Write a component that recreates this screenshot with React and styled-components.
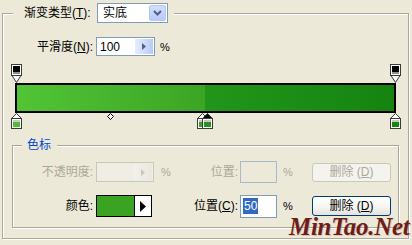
import React from "react";
import styled, { createGlobalStyle } from "styled-components";

const Global = createGlobalStyle`
  html, body { margin: 0; padding: 0; background: #ECE9D8; }
  body {
    width: 412px; height: 245px; overflow: hidden;
    font-family: "Liberation Sans", "Noto Sans CJK SC", sans-serif;
    font-size: 12px; color: #000;
  }
`;

const Page = styled.div`
  position: relative;
  width: 412px;
  height: 245px;
  box-sizing: border-box;
  padding: 3px 3px 0 2px;
`;

const GroupBox = styled.fieldset`
  margin: ${(p) => p.$margin};
  padding: 0 0 ${(p) => p.$pb}px 0;
  border: 1px solid #ACA899;
  box-shadow: inset 1px 1px 0 #fff, 1px 1px 0 #fff;
  min-width: 0;
`;

const Legend = styled.legend`
  margin-left: ${(p) => p.$ml}px;
  padding: 0 ${(p) => p.$pr}px 0 ${(p) => p.$pl}px;
  background: #ECE9D8;
  display: flex;
  align-items: center;
  line-height: 14px;
  color: ${(p) => p.$color || "#000"};
`;

const Label = styled.span`
  flex: none;
  width: ${(p) => p.$w}px;
  text-align: ${(p) => p.$align || "left"};
  padding-right: ${(p) => p.$pr || 0}px;
  box-sizing: border-box;
  white-space: nowrap;
  line-height: 14px;
  color: ${(p) => (p.$disabled ? "#ACA899" : "#000")};
`;

const Select = styled.div`
  display: flex;
  box-sizing: border-box;
  width: 71px;
  height: 20px;
  border: 1px solid #7F9DB9;
  background: #fff;
`;

const SelectText = styled.span`
  flex: 1;
  padding-left: 5px;
  line-height: 18px;
`;

const SelectButton = styled.span`
  width: 17px;
  margin: 1px;
  box-sizing: border-box;
  border: 1px solid #B4C8F6;
  border-radius: 2px;
  background: linear-gradient(#D2DEFB, #B7CBF8);
  display: flex;
  align-items: center;
  justify-content: center;
`;

const SmoothRow = styled.div`
  display: flex;
  align-items: center;
  margin-top: 14px;
  height: 19px;
`;

const SpinField = styled.div`
  display: flex;
  box-sizing: border-box;
  width: ${(p) => p.$w}px;
  height: ${(p) => p.$h}px;
  margin-left: ${(p) => p.$ml || 0}px;
  border: 1px solid ${(p) => (p.$disabled ? "#CAC8BB" : "#7F9DB9")};
  background: ${(p) => (p.$disabled ? "#EFEDE4" : "#fff")};
`;

const SpinText = styled.span`
  flex: 1;
  padding-left: 3px;
  font-size: 12px;
  display: flex;
  align-items: center;
`;

const SpinButton = styled.span`
  width: 18px;
  margin: 1px;
  display: flex;
  align-items: center;
  justify-content: center;
  background: ${(p) =>
    p.$disabled
      ? "linear-gradient(to right, #F2F1EA, #E9E7DE)"
      : "linear-gradient(to right, #E6EDFD, #B8CAF6)"};
`;

const Percent = styled.span`
  margin-left: ${(p) => p.$ml || 0}px;
  font-size: 11px;
  color: ${(p) => (p.$disabled ? "#ACA899" : "#000")};
`;

const GradientArea = styled.div`
  position: relative;
  width: 381px;
  margin: 8px 0 0 12px;
  padding: 19px 0 16px;
`;

const Bar = styled.div`
  box-sizing: border-box;
  height: 30px;
  border: 2px solid #000;
  background: linear-gradient(
    to right,
    #51C536 0%,
    #3BA524 49.8%,
    #21961A 49.8%,
    #15840F 100%
  );
`;

const StopSlot = styled.span`
  position: absolute;
  display: block;
  width: 11px;
  margin-left: -5px;
  line-height: 0;
  top: ${(p) => (p.$top ? "0" : "49px")};
`;

const Diamond = styled.span`
  position: absolute;
  top: 49px;
  width: 7px;
  height: 7px;
  margin-left: -3px;
  line-height: 0;
`;

const ColorGrid = styled.div`
  display: grid;
  grid-template-columns: 83px 58px 36px 50px 37px 35px 79px;
  grid-template-rows: 20px 22px;
  row-gap: 13px;
  align-items: center;
  margin-top: 10px;
`;

const Cell = styled.div`
  display: flex;
  align-items: center;
  justify-content: ${(p) => (p.$right ? "flex-end" : "flex-start")};
  padding-right: ${(p) => p.$pr || 0}px;
  padding-left: ${(p) => p.$pl || 0}px;
`;

const TextBox = styled.div`
  box-sizing: border-box;
  width: 37px;
  height: ${(p) => p.$h}px;
  border: 1px solid ${(p) => (p.$disabled ? "#A9B8CC" : "#7F9DB9")};
  background: ${(p) => (p.$disabled ? "#ECE9D8" : "#fff")};
  display: flex;
  align-items: center;
  padding-left: 2px;
`;

const Selected = styled.span`
  background: #316AC5;
  color: #fff;
  line-height: 16px;
  padding: 0 1px;
  font-size: 12px;
`;

const Swatch = styled.div`
  box-sizing: border-box;
  width: 56px;
  height: 22px;
  border: 1px solid #000;
  display: flex;
`;

const SwatchColor = styled.span`
  flex: 1;
  background: #3AA422;
  border-right: 1px solid #000;
`;

const SwatchArrow = styled.span`
  width: 16px;
  background: #fff;
  display: flex;
  align-items: center;
  justify-content: center;
`;

const Button = styled.div`
  box-sizing: border-box;
  width: 79px;
  height: ${(p) => (p.$disabled ? 19 : 20)}px;
  border: 1px solid ${(p) => (p.$disabled ? "#CAC8BB" : "#003C74")};
  border-radius: 3px;
  background: ${(p) =>
    p.$disabled
      ? "#F4F3EE"
      : "linear-gradient(#FFFFFF 0%, #F4F4F0 60%, #E3E1D8 100%)"};
  color: ${(p) => (p.$disabled ? "#ACA899" : "#000")};
  display: flex;
  align-items: center;
  justify-content: center;
  line-height: 14px;
  white-space: pre;
`;

const Watermark = styled.div`
  position: absolute;
  left: 289px;
  top: 213px;
  font-family: "Liberation Serif", "DejaVu Serif", serif;
  font-style: italic;
  font-weight: bold;
  font-size: 25px;
  color: #6E1C19;
  letter-spacing: -0.3px;
  text-shadow: 1px 1px 0 rgba(180, 120, 110, 0.35);
`;

const Chevron = () => (
  <svg width="9" height="6" viewBox="0 0 9 6">
    <path d="M1 1 L4.5 4.5 L8 1" fill="none" stroke="#4D6185" strokeWidth="2" />
  </svg>
);

const SmallArrow = ({ color }) => (
  <svg width="4" height="7" viewBox="0 0 4 7">
    <path d="M0 0 L4 3.5 L0 7 Z" fill={color} />
  </svg>
);

const TopStop = () => (
  <svg width="11" height="19" viewBox="0 0 11 19">
    <path d="M1 11.5 L5.5 18.5 L10 11.5 Z" fill="#fff" stroke="#3A3A3A" />
    <rect x="0.5" y="0.5" width="10" height="11" fill="#fff" stroke="#3A3A3A" />
    <rect x="2" y="2" width="7" height="6" fill="#000" />
    <rect x="2" y="8" width="7" height="2" fill="#8E8E8E" />
  </svg>
);

const BottomStop = ({ color, selected }) => (
  <svg width="11" height="16" viewBox="0 0 11 16">
    <path
      d="M5.5 0.5 L10.5 5.5 L0.5 5.5 Z"
      fill={selected ? "#000" : "#fff"}
      stroke="#3A3A3A"
    />
    <rect x="0.5" y="5.5" width="10" height="10" fill="#fff" stroke="#3A3A3A" />
    <rect x="2" y="7" width="7" height="2" fill="#C8C8C8" />
    <rect x="2" y="9" width="7" height="5" fill={color} />
  </svg>
);

const stopLeft = (p) => `calc(1px + (100% - 2px) * ${p})`;

const colorStops = [
  { p: 0, color: "#4DBE33" },
  { p: 0.492, color: "#3AA422" },
  { p: 0.503, color: "#21961A", selected: true },
  { p: 1, color: "#17860F" },
];

export default function App() {
  return (
    <>
      <Global />
      <Page>
        <GroupBox $margin="0" $pb={0}>
          <Legend $ml={10} $pl={11} $pr={6}>
            <Label $w={73}>
              渐变类型(<u>T</u>):
            </Label>
            <Select>
              <SelectText>实底</SelectText>
              <SelectButton>
                <Chevron />
              </SelectButton>
            </Select>
          </Legend>

          <SmoothRow>
            <Label $w={90} $align="right">
              平滑度(<u>N</u>):
            </Label>
            <SpinField $w={59} $h={19} $ml={3}>
              <SpinText>100</SpinText>
              <SpinButton>
                <SmallArrow color="#4D6185" />
              </SpinButton>
            </SpinField>
            <Percent $ml={5}>%</Percent>
          </SmoothRow>

          <GradientArea>
            <Bar />
            <StopSlot $top style={{ left: stopLeft(0) }}>
              <TopStop />
            </StopSlot>
            <StopSlot $top style={{ left: stopLeft(1) }}>
              <TopStop />
            </StopSlot>
            <Diamond style={{ left: stopLeft(0.2487) }}>
              <svg width="7" height="7" viewBox="0 0 7 7">
                <path d="M3.5 0.5 L6.5 3.5 L3.5 6.5 L0.5 3.5 Z" fill="#fff" stroke="#000" />
              </svg>
            </Diamond>
            {colorStops.map((s, i) => (
              <StopSlot key={i} style={{ left: stopLeft(s.p) }}>
                <BottomStop color={s.color} selected={s.selected} />
              </StopSlot>
            ))}
          </GradientArea>

          <GroupBox $margin="9px 9px 10px 9px" $pb={10}>
            <Legend $ml={9} $pl={5} $pr={6} $color="#0046D5">
              色标
            </Legend>
            <ColorGrid>
              <Cell $right $pr={3}>
                <Label $disabled>不透明度:</Label>
              </Cell>
              <Cell>
                <SpinField $w={58} $h={20} $disabled>
                  <SpinText />
                  <SpinButton $disabled>
                    <SmallArrow color="#C9C7BA" />
                  </SpinButton>
                </SpinField>
              </Cell>
              <Cell $pl={7}>
                <Percent $disabled>%</Percent>
              </Cell>
              <Cell $right $pr={2}>
                <Label $disabled>位置:</Label>
              </Cell>
              <Cell>
                <TextBox $h={22} $disabled />
              </Cell>
              <Cell $pl={6}>
                <Percent $disabled>%</Percent>
              </Cell>
              <Cell>
                <Button $disabled>
                  删除 (<u>D</u>)
                </Button>
              </Cell>

              <Cell $right $pr={3}>
                <Label>颜色:</Label>
              </Cell>
              <Cell>
                <Swatch>
                  <SwatchColor />
                  <SwatchArrow>
                    <svg width="6" height="11" viewBox="0 0 6 11">
                      <path d="M0 0 L6 5.5 L0 11 Z" fill="#000" />
                    </svg>
                  </SwatchArrow>
                </Swatch>
              </Cell>
              <Cell />
              <Cell $right $pr={2}>
                <Label>
                  位置(<u>C</u>):
                </Label>
              </Cell>
              <Cell>
                <TextBox $h={23}>
                  <Selected>50</Selected>
                </TextBox>
              </Cell>
              <Cell $pl={6}>
                <Percent>%</Percent>
              </Cell>
              <Cell>
                <Button>
                  删除 (<u>D</u>)
                </Button>
              </Cell>
            </ColorGrid>
          </GroupBox>
        </GroupBox>
        <Watermark>MinTao.Net</Watermark>
      </Page>
    </>
  );
}
